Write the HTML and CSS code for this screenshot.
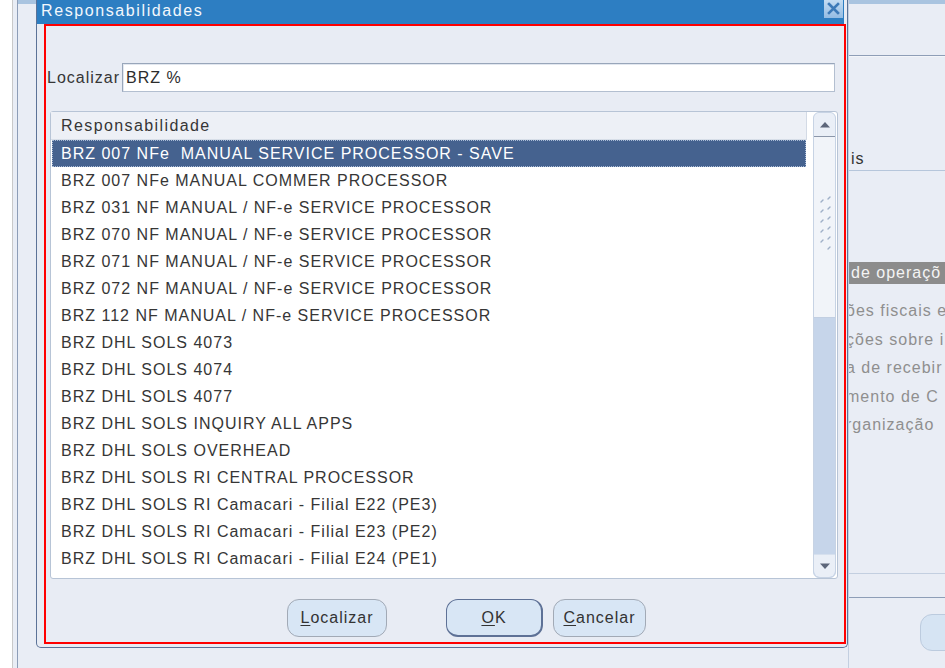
FILE: index.html
```html
<!DOCTYPE html>
<html lang="pt">
<head>
<meta charset="utf-8">
<title>Responsabilidades</title>
<link rel="stylesheet" href="styles.css">
</head>
<body>
<div class="screen">
  <div class="edge"></div>
  <div class="back-strip"></div>
  <div class="back-left"></div>

  <div class="dialog">
    <div class="titlebar">
      <span class="title">Responsabilidades</span>
      <span class="close">
        <svg width="19" height="18" viewBox="0 0 19 18">
          <defs>
            <linearGradient id="cg" x1="0" y1="0" x2="0" y2="1">
              <stop offset="0" stop-color="#c4dcf2"/>
              <stop offset="1" stop-color="#94bce3"/>
            </linearGradient>
          </defs>
          <rect x="0" y="0" width="19" height="18" fill="url(#cg)"/>
          <path d="M5 4 L14 13 M14 4 L5 13" stroke="#3d7ab8" stroke-width="2.6" stroke-linecap="square"/>
        </svg>
      </span>
    </div>

    <div class="content">
      <div class="find-row">
        <span class="find-label">Localizar</span>
        <div class="find-input">BRZ %</div>
      </div>

      <div class="list">
        <div class="list-main">
          <div class="list-header">Responsabilidade</div>
          <div class="row selected">BRZ 007 NFe&nbsp; MANUAL SERVICE PROCESSOR - SAVE</div>
          <div class="row">BRZ 007 NFe MANUAL COMMER PROCESSOR</div>
          <div class="row">BRZ 031 NF MANUAL / NF-e SERVICE PROCESSOR</div>
          <div class="row">BRZ 070 NF MANUAL / NF-e SERVICE PROCESSOR</div>
          <div class="row">BRZ 071 NF MANUAL / NF-e SERVICE PROCESSOR</div>
          <div class="row">BRZ 072 NF MANUAL / NF-e SERVICE PROCESSOR</div>
          <div class="row">BRZ 112 NF MANUAL / NF-e SERVICE PROCESSOR</div>
          <div class="row">BRZ DHL SOLS 4073</div>
          <div class="row">BRZ DHL SOLS 4074</div>
          <div class="row">BRZ DHL SOLS 4077</div>
          <div class="row">BRZ DHL SOLS INQUIRY ALL APPS</div>
          <div class="row">BRZ DHL SOLS OVERHEAD</div>
          <div class="row">BRZ DHL SOLS RI CENTRAL PROCESSOR</div>
          <div class="row">BRZ DHL SOLS RI Camacari - Filial E22 (PE3)</div>
          <div class="row">BRZ DHL SOLS RI Camacari - Filial E23 (PE2)</div>
          <div class="row">BRZ DHL SOLS RI Camacari - Filial E24 (PE1)</div>
        </div>
        <div class="scrollbar">
          <div class="sb-btn sb-up">
            <svg width="12" height="7" viewBox="0 0 12 7"><path d="M1 6.5 L6 1 L11 6.5 Z" fill="#5d667a"/></svg>
          </div>
          <div class="sb-thumb">
            <svg width="14" height="54" viewBox="0 0 14 54">
              <g stroke="#9fb0c8" stroke-width="1.4" stroke-linecap="round">
                <path d="M3 6 L5 4"/><path d="M10 3 L12 1"/>
                <path d="M3 16 L5 14"/><path d="M10 13 L12 11"/>
                <path d="M3 26 L5 24"/><path d="M10 23 L12 21"/>
                <path d="M3 36 L5 34"/><path d="M10 33 L12 31"/>
                <path d="M3 46 L5 44"/><path d="M10 43 L12 41"/>
                <path d="M10 53 L12 51"/>
              </g>
            </svg>
          </div>
          <div class="sb-track"></div>
          <div class="sb-btn sb-down">
            <svg width="12" height="7" viewBox="0 0 12 7"><path d="M1 0.5 L6 6 L11 0.5 Z" fill="#5d667a"/></svg>
          </div>
        </div>
      </div>

      <div class="buttons">
        <div class="btn btn-find"><u>L</u>ocalizar</div>
        <div class="btn btn-ok"><u>O</u>K</div>
        <div class="btn btn-cancel"><u>C</u>ancelar</div>
      </div>
    </div>
  </div>

  <div class="back-right">
    <div class="br-band"></div>
    <div class="br-line1"></div>
    <div class="br-is">is</div>
    <div class="br-bar">de operaçõ</div>
    <div class="br-lines">
      <div class="br-text">ões fiscais e</div>
      <div class="br-text">ções sobre i</div>
      <div class="br-text">a de recebir</div>
      <div class="br-text">mento de C</div>
      <div class="br-text">rganização</div>
    </div>
    <div class="br-line2"></div>
    <div class="br-line3"></div>
    <div class="br-button"></div>
  </div>
</div>
</body>
</html>
```

FILE: styles.css
```css
* { box-sizing: border-box; }

html, body {
  margin: 0;
  padding: 0;
}

body {
  width: 945px;
  height: 668px;
  overflow: hidden;
  background: #e9edf5;
  font-family: "Liberation Sans", Arial, sans-serif;
  font-size: 16px;
  letter-spacing: 1px;
  color: #363636;
}

.screen {
  display: flex;
  height: 668px;
}

/* left background */
.edge {
  width: 13px;
  background: #ffffff;
  border-right: 1px solid #c9c9c9;
}

.back-strip {
  width: 5px;
  background: #e9edf5;
  border-right: 1px solid #8d9db7;
}

.back-left {
  width: 18px;
  background: linear-gradient(#a9c4e0 0, #a9c4e0 4px, #e9edf5 4px);
}

/* dialog */
.dialog {
  width: 812px;
  height: 648px;
  display: flex;
  flex-direction: column;
  background: #e8ecf4;
  border: 1px solid #5b7297;
  border-top: none;
  border-radius: 0 0 5px 5px;
}

.titlebar {
  height: 24px;
  margin-right: 3px;
  display: flex;
  align-items: flex-start;
  background: #2d7ec2;
  padding-left: 4px;
}

.title {
  color: #f2f7fc;
  line-height: 22px;
  letter-spacing: 1.6px;
}

.close {
  margin-left: auto;
  margin-right: 1px;
  width: 19px;
  height: 18px;
  display: block;
}

.close svg { display: block; }

.content {
  height: 620px;
  margin: 0 1px 3px 7px;
  border: 2px solid #ff0000;
  display: flex;
  flex-direction: column;
}

.find-row {
  margin-top: 37px;
  height: 29px;
  display: flex;
  align-items: center;
  padding-left: 1px;
}

.find-label {
  width: 75px;
}

.find-input {
  width: 713px;
  height: 29px;
  background: #ffffff;
  border: 1px solid #b3bfd0;
  border-top-color: #98a6ba;
  border-left-color: #98a6ba;
  box-shadow: inset 1px 1px 0 #e2e7ef;
  padding-left: 3px;
  line-height: 27px;
  color: #2c2c2c;
}

/* list */
.list {
  margin: 19px 6px 0 4px;
  height: 468px;
  display: flex;
  background: #ffffff;
  border: 1px solid #b7c4d6;
  border-radius: 3px;
}

.list-main {
  width: 756px;
}

.list-header {
  height: 28px;
  line-height: 27px;
  padding-left: 10px;
  background: #edf0f6;
  border-right: 1px solid #d3dae5;
  border-bottom: 1px solid #d7dee8;
  letter-spacing: 1.4px;
}

.row {
  height: 27px;
  line-height: 27px;
  padding-left: 10px;
  white-space: nowrap;
}

.row.selected {
  margin-left: 1px;
  margin-right: 1px;
  padding-left: 9px;
  background: #45628f;
  color: #ffffff;
  outline: 1px dotted #a9bbd6;
  outline-offset: -1px;
}

.scrollbar {
  width: 23px;
  margin-left: 6px;
  margin-right: 1px;
  display: flex;
  flex-direction: column;
  border: 1px solid #c7d3e4;
  border-radius: 6px;
  overflow: hidden;
  background: #c6d5ea;
}

.sb-btn {
  display: flex;
  align-items: center;
  justify-content: center;
  background: #eaeff7;
}

.sb-btn svg { display: block; }

.sb-up {
  height: 24px;
  border-bottom: 1px solid #8b96a9;
}

.sb-thumb {
  height: 181px;
  background: #f1f4f9;
  border-bottom: 1px solid #c2cfe2;
  display: flex;
  align-items: flex-end;
  justify-content: center;
  padding-bottom: 67px;
}

.sb-thumb svg { display: block; }

.sb-track {
  flex: 1;
  background: #c6d5ea;
}

.sb-down {
  height: 23px;
  border-top: 1px solid #d6e0ee;
  border-radius: 0 0 6px 6px;
}

/* buttons */
.buttons {
  margin-top: 20px;
  height: 38px;
  display: flex;
  padding-left: 241px;
}

.btn {
  height: 38px;
  display: flex;
  align-items: center;
  justify-content: center;
  background: #d8e6f5;
  border: 1px solid #a2aab6;
  border-radius: 12px;
  color: #333333;
}

.btn u { text-decoration-thickness: 1px; text-underline-offset: 2px; }

.btn-find { width: 100px; }

.btn-ok {
  width: 97px;
  margin-left: 59px;
  border-color: #5e7196;
  border-width: 1px 2px 2px 1px;
}

.btn-cancel {
  width: 93px;
  margin-left: 10px;
}

/* right background */
.back-right {
  flex: 1;
  display: flex;
  flex-direction: column;
  border-left: 1px solid #c3cfe0;
  overflow: hidden;
  white-space: nowrap;
}

.br-band {
  height: 4px;
  background: #a9c4e0;
}

.br-line1 {
  margin-top: 51px;
  height: 2px;
  border-top: 1px solid #8e9eb7;
  border-bottom: 1px solid #f3f5f9;
}

.br-is {
  margin-top: 91px;
  height: 23px;
  line-height: 22px;
  padding-left: 2px;
  border-bottom: 1px solid #b6c6db;
  color: #333333;
}

.br-bar {
  margin-top: 91px;
  height: 22px;
  line-height: 22px;
  padding-left: 2px;
  background: #8c8c8c;
  color: #f4f4f4;
}

.br-lines {
  margin-top: 13px;
}

.br-text {
  height: 28.5px;
  line-height: 28.5px;
  color: #8f8f8f;
  margin-left: -3px;
}

.br-line2 {
  margin-top: 133px;
  border-top: 1px solid #c3cfe0;
}

.br-line3 {
  margin-top: 23px;
  border-top: 1px solid #8e9eb7;
}

.br-button {
  margin-top: 16px;
  margin-left: 71px;
  width: 60px;
  height: 37px;
  background: #d6e4f3;
  border: 1px solid #bccbde;
  border-radius: 12px;
}
```
